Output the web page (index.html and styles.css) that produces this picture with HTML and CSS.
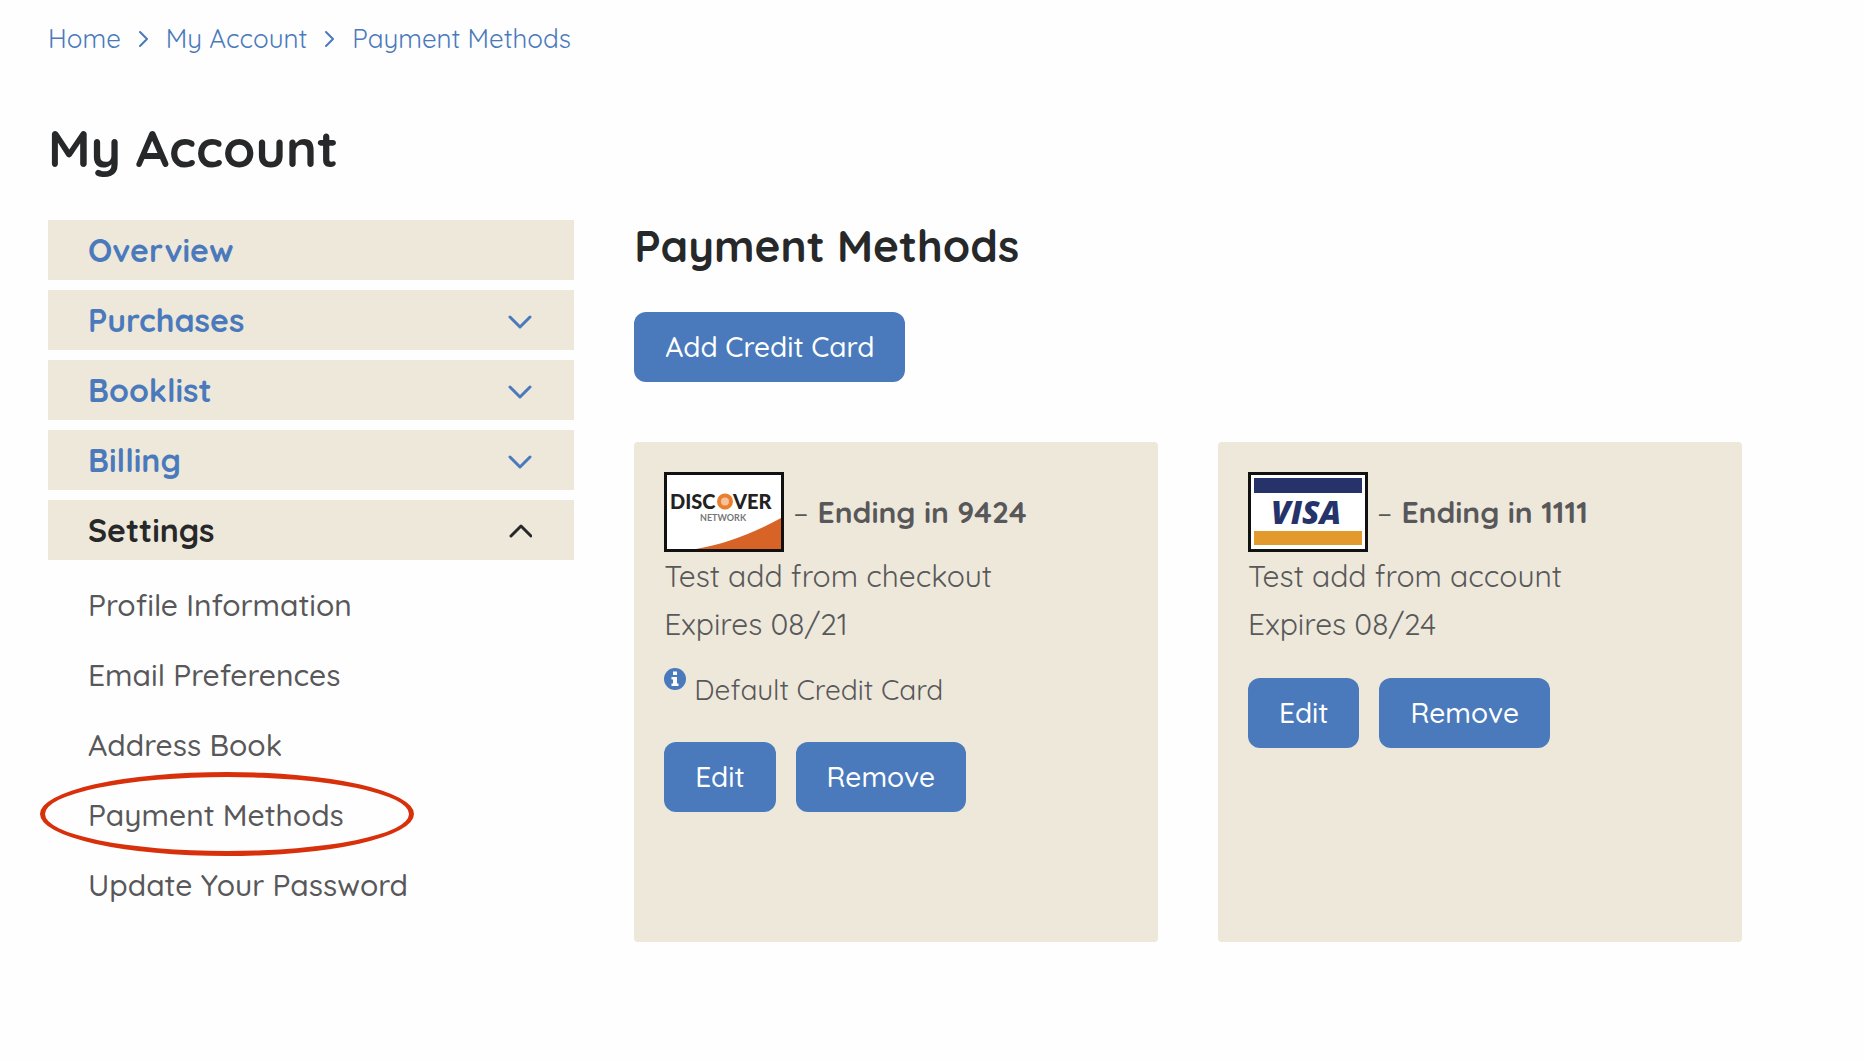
FILE: index.html
```html
<!DOCTYPE html>
<html lang="en">
  <head>
    <meta charset="utf-8">
    <title>Payment Methods | My Account</title>
    <meta name="viewport" content="width=device-width, initial-scale=1">

    <link rel="stylesheet" href="styles.css">
  </head>
  <body>
    <nav class="breadcrumbs" aria-label="Breadcrumb">
      <a href="#">Home</a>
      <svg class="breadcrumbs__arrow" viewBox="0 0 9 18"><path d="M1 2 L8 9 L1 16"/></svg>
      <a href="#">My Account</a>
      <svg class="breadcrumbs__arrow" viewBox="0 0 9 18"><path d="M1 2 L8 9 L1 16"/></svg>
      <a href="#">Payment Methods</a>
    </nav>

    <h1 class="page-title">My Account</h1>

    <div class="account">
      <nav class="menu" aria-label="My Account">
        <a class="menu__item" href="#">Overview</a>
        <button class="menu__item" type="button" aria-expanded="false">
          Purchases
          <svg class="menu__arrow" viewBox="0 0 24 18"><path d="M2 6 L12 16 L22 6"/></svg>
        </button>
        <button class="menu__item" type="button" aria-expanded="false">
          Booklist
          <svg class="menu__arrow" viewBox="0 0 24 18"><path d="M2 6 L12 16 L22 6"/></svg>
        </button>
        <button class="menu__item" type="button" aria-expanded="false">
          Billing
          <svg class="menu__arrow" viewBox="0 0 24 18"><path d="M2 6 L12 16 L22 6"/></svg>
        </button>
        <button class="menu__item is-open" type="button" aria-expanded="true">
          Settings
          <svg class="menu__arrow" viewBox="0 0 24 18"><path d="M3 15 L13 5 L23 15"/></svg>
        </button>
        <ul class="submenu">
          <li><a href="#">Profile Information</a></li>
          <li><a href="#">Email Preferences</a></li>
          <li><a href="#">Address Book</a></li>
          <li class="is-circled"><a href="#">Payment Methods</a></li>
          <li><a href="#">Update Your Password</a></li>
        </ul>
      </nav>

      <main class="content">
        <h2 class="content__title">Payment Methods</h2>
        <button class="button" type="button">Add Credit Card</button>

        <div class="cards">
          <section class="card">
            <div class="card__number">
              <svg class="card__logo" viewBox="0 0 120 80" role="img" aria-label="Discover Network">
                <rect x="1.5" y="1.5" width="117" height="77" fill="#fff" stroke="#111" stroke-width="3"/>
                <path d="M32 77 C62 72 90 61 117 46 V77 Z" fill="#d86327"/>
                <text x="6" y="37" class="logo-discover">DISC</text>
                <circle cx="61" cy="29.5" r="6" fill="#f6c29c" stroke="#e8802f" stroke-width="4"/>
                <text x="69" y="37" class="logo-discover">VER</text>
                <text x="36" y="49" class="logo-network">NETWORK</text>
              </svg>
              <span>–</span>
              <strong>Ending in 9424</strong>
            </div>
            <p class="card__line">Test add from checkout</p>
            <p class="card__line">Expires 08/21</p>
            <p class="card__default">
              <svg class="card__info" viewBox="0 0 22 22">
                <circle cx="11" cy="11" r="11" fill="#4a7abc"/>
                <path d="M9 3.5 H13 V7 H9 Z M7.5 9 H13 V15.5 H14.5 V18 H7.5 V15.5 H9 V11.5 H7.5 Z" fill="#fff"/>
              </svg>
              Default Credit Card
            </p>
            <div class="card__actions">
              <button class="button" type="button">Edit</button>
              <button class="button" type="button">Remove</button>
            </div>
          </section>

          <section class="card">
            <div class="card__number">
              <svg class="card__logo" viewBox="0 0 120 80" role="img" aria-label="Visa">
                <rect x="1.5" y="1.5" width="117" height="77" fill="#fff" stroke="#111" stroke-width="3"/>
                <rect x="6" y="6" width="108" height="15" fill="#26336b"/>
                <rect x="6" y="59" width="108" height="14" fill="#e39a2d"/>
                <text x="23" y="52" class="logo-visa">VISA</text>
              </svg>
              <span>–</span>
              <strong>Ending in 1111</strong>
            </div>
            <p class="card__line">Test add from account</p>
            <p class="card__line">Expires 08/24</p>
            <div class="card__actions">
              <button class="button" type="button">Edit</button>
              <button class="button" type="button">Remove</button>
            </div>
          </section>
        </div>
      </main>
    </div>
  </body>
</html>
```
FILE: styles.css
```css
/* Base */
*,
*::before {
  box-sizing: border-box;
}

body {
  background: #fefefe;
  color: #58585a;
  font-family: Quicksand, Inter, sans-serif;
  font-size: 30px;
  line-height: 48px;
  margin: 0;
  padding: 15px 122px 60px 48px;
}

h1,
h2,
p,
ul {
  margin: 0;
  padding: 0;
}

a {
  color: inherit;
  text-decoration: none;
}

svg {
  flex: none;
}

/* Modules */
.breadcrumbs {
  align-items: center;
  color: #4a7abc;
  display: flex;
  font-size: 26px;
  gap: 18px;
}

.breadcrumbs__arrow,
.menu__arrow {
  fill: none;
  stroke: currentColor;
  stroke-linecap: round;
  stroke-linejoin: round;
  stroke-width: 3;
}

.breadcrumbs__arrow {
  height: 18px;
  stroke-width: 2;
  width: 9px;
}

.page-title {
  color: #272829;
  font-size: 52px;
  line-height: 60px;
  margin: 55px 0 42px;
}

.account {
  align-items: start;
  display: grid;
  gap: 60px;
  grid-template-columns: 19fr 40fr;
}

.menu {
  display: flex;
  flex-direction: column;
  gap: 10px;
}

.menu__item {
  align-items: center;
  background: #eee8da;
  border: 0;
  color: #4a7abc;
  display: flex;
  font: bold 32px/60px Quicksand, Inter, sans-serif;
  justify-content: space-between;
  padding: 0 42px 0 40px;
}

.menu__item.is-open {
  color: #272829;
}

.menu__arrow {
  height: 18px;
  width: 24px;
}

.submenu {
  font-weight: 500;
  line-height: 70px;
  list-style: none;
  padding-left: 40px;
}

.content__title {
  color: #272829;
  font-size: 44px;
  line-height: 52px;
  margin-bottom: 40px;
}

.button {
  background: #4a7abc;
  border: 0;
  border-radius: 12px;
  color: #fff;
  font: 500 28px/70px Quicksand, Inter, sans-serif;
  padding: 0 31px;
}

.cards {
  display: grid;
  gap: 60px;
  grid-template-columns: 1fr 1fr;
  margin-top: 60px;
}

.card {
  background: #eee8da;
  border-radius: 4px;
  min-height: 500px;
  padding: 30px;
}

.card__number {
  align-items: center;
  display: flex;
  gap: 9px;
}

.card__logo {
  height: 80px;
  width: 120px;
}

.card__default {
  display: flex;
  font-size: 28px;
  gap: 8px;
  line-height: 44px;
  margin-top: 20px;
}

.card__info {
  height: 22px;
  width: 22px;
}

.card__actions {
  display: flex;
  gap: 20px;
  margin-top: 30px;
}

/* Card logos */
.logo-discover {
  fill: #222;
  font: 900 20px Lato, sans-serif;
}

.logo-network {
  fill: #777;
  font: bold 9px Lato, sans-serif;
}

.logo-visa {
  fill: #26336b;
  font: italic 800 32px "Open Sans", sans-serif;
}

/* State */
.is-circled {
  position: relative;
}

.is-circled::before {
  border: 5px solid #d9300c;
  border-radius: 50%;
  content: "";
  height: 84px;
  left: -48px;
  pointer-events: none;
  position: absolute;
  top: -8px;
  width: 374px;
}
```
